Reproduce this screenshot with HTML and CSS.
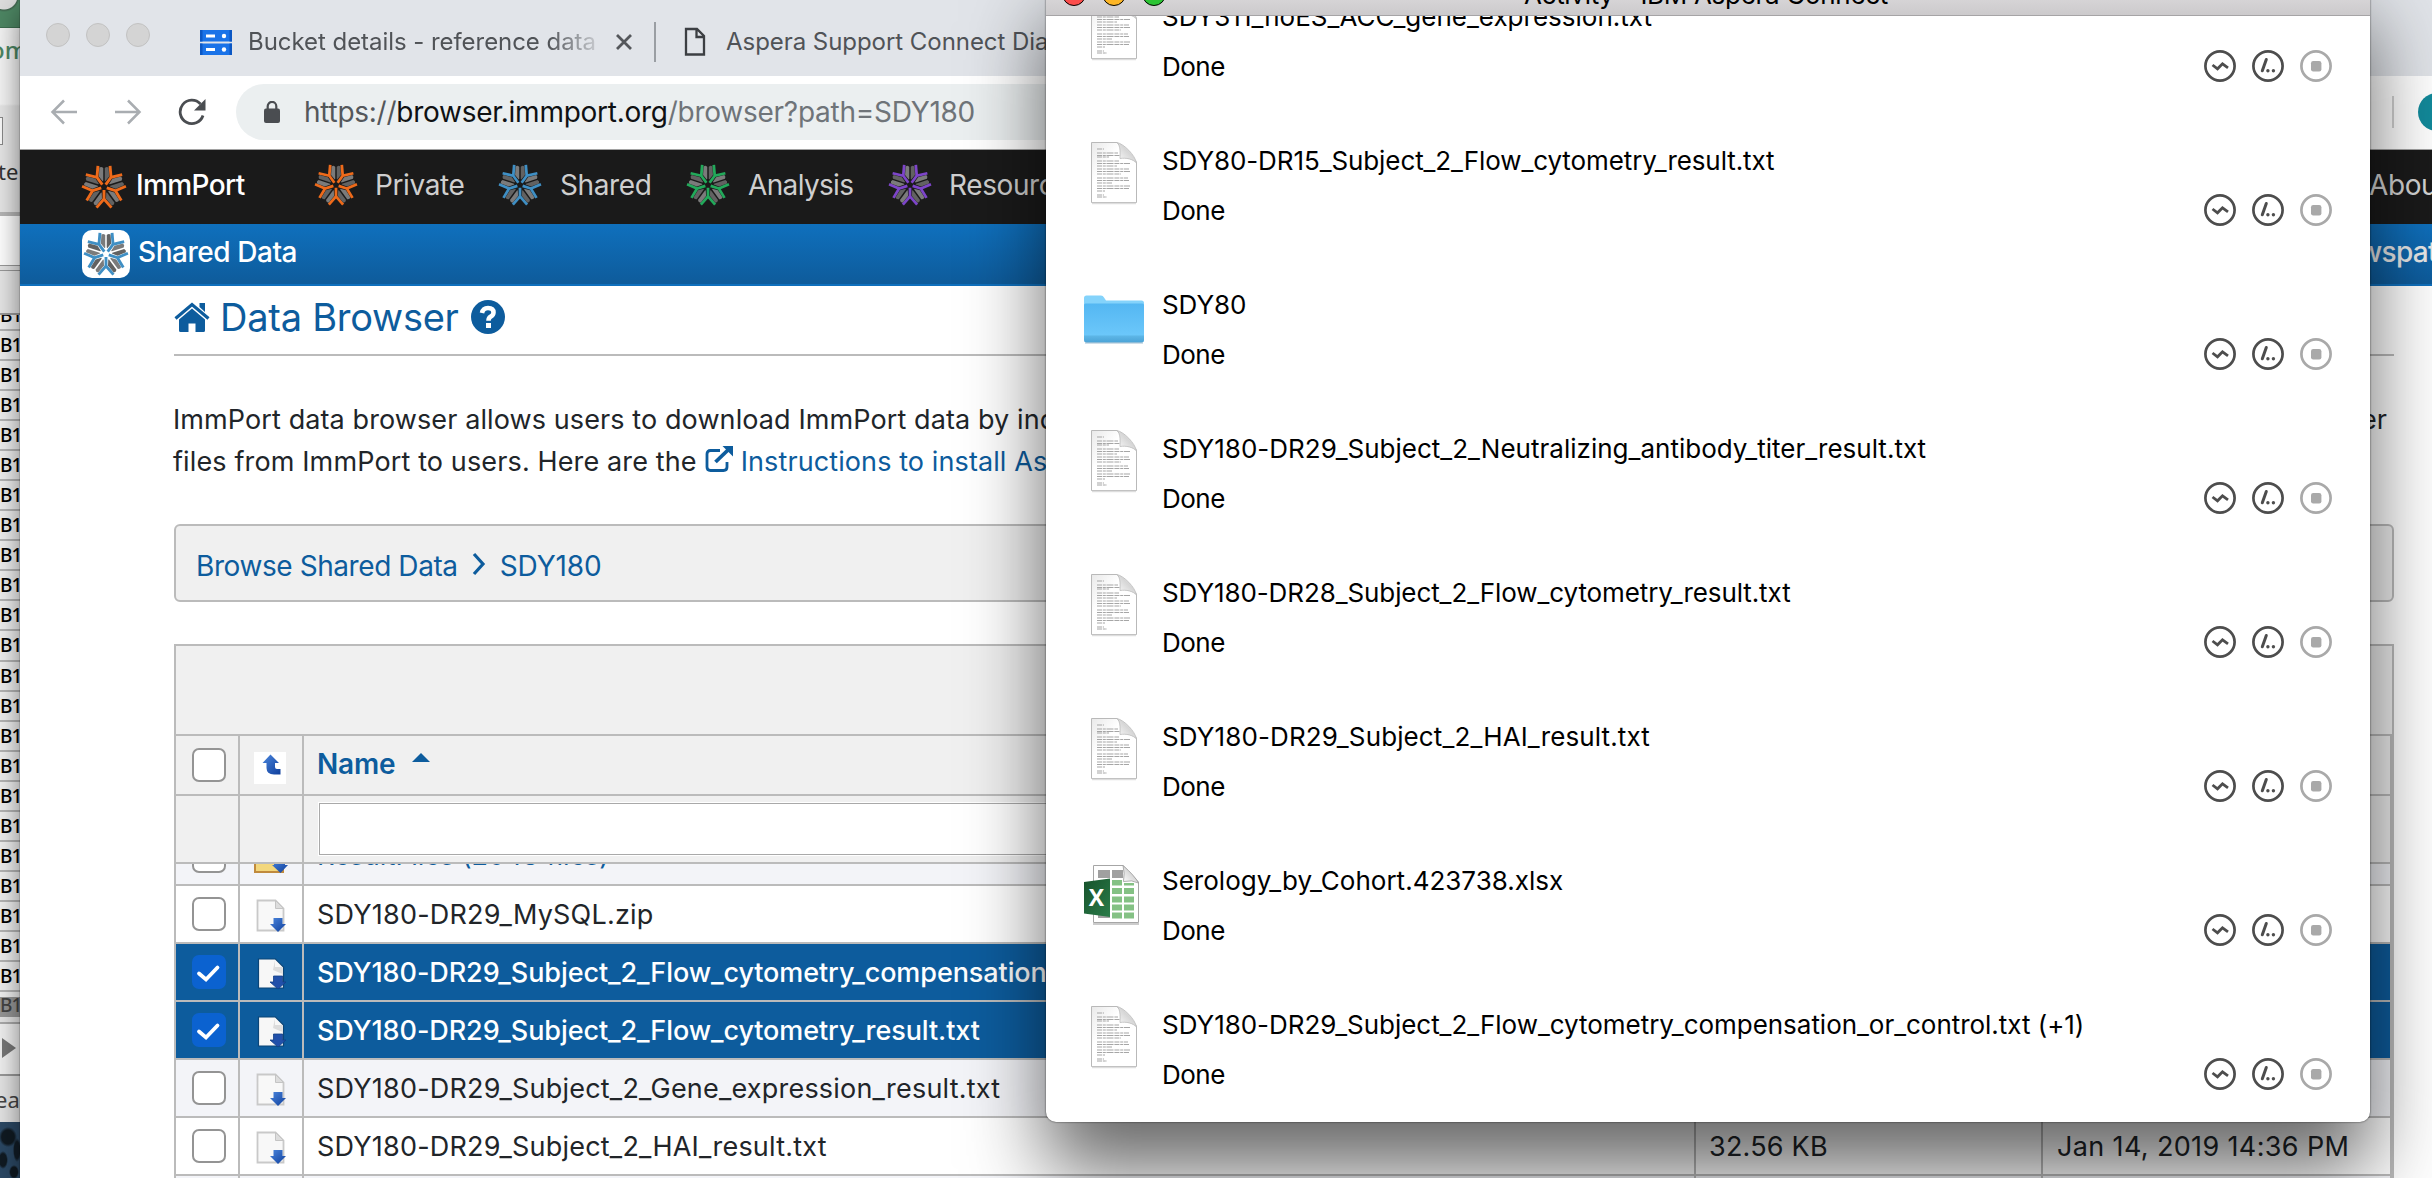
FILE: index.html
```
<!DOCTYPE html>
<html lang="en">
<head>
<meta charset="utf-8">
<title>ImmPort Data Browser</title>
<link rel="stylesheet" href="styles.css">
</head>
<body>
<svg width="0" height="0" class="defs" aria-hidden="true">
  <defs>
    <linearGradient id="paper" x1="0" y1="0" x2="1" y2="1"><stop offset="0" stop-color="#e9e9e9"/><stop offset=".35" stop-color="#fff"/><stop offset="1" stop-color="#fff"/></linearGradient>
    <linearGradient id="curl" x1="0" y1="1" x2="1" y2="0"><stop offset="0" stop-color="#fff"/><stop offset=".55" stop-color="#d6d6d6"/><stop offset="1" stop-color="#f4f4f4"/></linearGradient>
    <linearGradient id="folderFront" x1="0" y1="0" x2="0" y2="1"><stop offset="0" stop-color="#54b7f2"/><stop offset=".8" stop-color="#6bc7fa"/><stop offset=".84" stop-color="#5cb5e6"/><stop offset="1" stop-color="#4ba3d6"/></linearGradient>
    <linearGradient id="excel" x1="0" y1="0" x2="1" y2="1"><stop offset="0" stop-color="#17522b"/><stop offset="1" stop-color="#2a7c49"/></linearGradient>
    <linearGradient id="blue" x1="0" y1="0" x2="1" y2="1"><stop offset="0" stop-color="#4b86dd"/><stop offset="1" stop-color="#0f3f9c"/></linearGradient>
    <g id="arm">
      <path d="M-1.400-6-5.400-11-4.800-20.300q2.200-1.400 4 .6v13z" fill="#7b7b7b"/>
      <path d="M1.400-6 5.400-11 4.800-20.300q-2.200-1.400-4 .6v13z" fill="#626262"/>
      <path d="M0 3V12.500L-7.800 21.500M0 12.500 7.800 21.500" fill="none" stroke="currentColor" stroke-width="3"/>
    </g>
    <symbol id="flake" viewBox="-24 -24 48 48">
      <use href="#arm"/><use href="#arm" transform="rotate(72)"/><use href="#arm" transform="rotate(144)"/><use href="#arm" transform="rotate(216)"/><use href="#arm" transform="rotate(288)"/>
    </symbol>
    <symbol id="doc" viewBox="0 0 60 66">
      <path d="M7.500 2.500H33L52.500 22V62.500H7.500z" fill="url(#paper)" stroke="#b9b9b9"/>
      <path d="M8 63.500H52" stroke="#ddd" stroke-width="1.500"/>
      <path d="M33 2.500C37 6 36 14 36 18.500 42 17.500 49 19 52.500 23 51 15 40 4 33 2.500z" fill="url(#curl)" stroke="#bbb" stroke-width=".8"/>
      <path d="M13 9h7M13 13h21M13 15.500h23M13 17h12M13 21h22M13 23.500h33M13 26h20M13 29h32M13 31.500h33M13 34h24M13 38h31M13 40.500h32M13 43h15M13 46h33M13 48.500h32M13 51h8M13 55h7M13 57h10" stroke="#a6a6a6" stroke-width="1.100" stroke-dasharray="5 .8 3 .7 7 .9"/>
    </symbol>
    <symbol id="folder" viewBox="0 0 60 66">
      <path d="M0 30V14q0-2.500 2.500-2.500H17q2 0 3 2l2 3H57.500q2.500 0 2.500 2.500V30z" fill="#84d3fb"/>
      <path d="M0 21q0-1.500 1.500-1.500H58.500q1.500 0 1.500 1.500V56q0 2.500-2.500 2.500H2.500Q0 58.500 0 56z" fill="url(#folderFront)"/>
      <path d="M1 59H59" stroke="#3f7ea6" stroke-opacity=".5"/>
    </symbol>
    <symbol id="xlsx" viewBox="0 0 60 66">
      <path d="M9.500 1.500H39L54.500 18V58.500H9.500z" fill="#fff" stroke="#a6a6a6"/>
      <path d="M9 60H55" stroke="#bbb" stroke-width="1.500"/>
      <path d="M14 6H26V14H14zM28 6H39V14H28zM14 50H26V54H14z" fill="#a0a0a0"/>
      <path d="M28 16H38V21.500H28zM40 19H50V21.500H40zM28 24H38V30H28zM40 24H50V30H40zM28 32.500H38V38.500H28zM40 32.500H50V38.500H40zM28 40.500H38V46.500H28zM40 40.500H50V46.500H40zM28 48.500H38V54.500H28zM40 48.500H50V54.500H40z" fill="#84c184"/>
      <path d="M39 1.500Q41 9 39.500 17.500 48 15.500 54.500 19 51 12 39 1.500z" fill="url(#curl)" stroke="#999" stroke-width=".8"/>
      <path d="M0 18 26 14.500V53L0 49.500z" fill="url(#excel)"/>
      <text x="12.500" y="42" text-anchor="middle" font-family="Open Sans, sans-serif" font-weight="700" font-size="23" fill="#fff">X</text>
    </symbol>
    <symbol id="a-wave" viewBox="0 0 32 32"><circle cx="16" cy="16" r="14.600" fill="none" stroke="currentColor" stroke-width="2.700"/><path d="M8.500 15 13.500 18.800 18.500 13.800 24 17.800" fill="none" stroke="currentColor" stroke-width="2.800"/></symbol>
    <symbol id="a-path" viewBox="0 0 32 32"><circle cx="16" cy="16" r="14.600" fill="none" stroke="currentColor" stroke-width="2.700"/><path d="M10.300 20.800 14.300 9.500" stroke="currentColor" stroke-width="3" stroke-linecap="round"/><circle cx="15.900" cy="20.800" r="1.700" fill="currentColor"/><circle cx="21.400" cy="20.800" r="1.700" fill="currentColor"/></symbol>
    <symbol id="a-stop" viewBox="0 0 32 32"><circle cx="16" cy="16" r="14.600" fill="none" stroke="currentColor" stroke-width="2.700"/><rect x="11" y="11" width="10.400" height="10.400" rx="2.200" fill="currentColor"/></symbol>
    <symbol id="dl" viewBox="0 0 32 34">
      <path d="M2.500 2.500H20.500L28.500 10.500V32.500H2.500z" fill="#f8f8f8" stroke="#c9c9c9" stroke-width="1.800"/>
      <path d="M20.500 2.500V10.500H28.500z" fill="#ddd" stroke="#c4c4c4"/>
      <path d="M18.500 20H27.500V26H31L23 34 15 26H18.500z" fill="url(#blue)"/>
    </symbol>
    <symbol id="dl-on" viewBox="0 0 32 34">
      <path d="M3.500 3H20.500L28.500 11V32H3.500z" fill="#f7f7f7" stroke="#0b4577" stroke-width="1.200"/>
      <path d="M20 4V11H27.500V18L18 14z" fill="#dcdcdc"/>
      <path d="M18.500 20H27.500V26H31L23 33 15 26H18.500z" fill="#2150aa" stroke="#123f86" stroke-width=".8"/>
    </symbol>
  </defs>
</svg>

<div class="desktop">
  <div class="sheet">
    <div class="sheet-title"></div>
    <div class="sheet-ribbon"><span class="ribbon-tab">om</span><i class="ribbon-icon"></i><span class="ribbon-label">te</span></div>
    <div class="sheet-formula"></div>
    <div class="sheet-head"></div>
    <div class="sheet-rows">
      <div class="first">B1</div>
      <div>B1</div><div>B1</div><div>B1</div><div>B1</div><div>B1</div><div>B1</div><div>B1</div><div>B1</div><div>B1</div><div>B1</div><div>B1</div>
      <div>B1</div><div>B1</div><div>B1</div><div>B1</div><div>B1</div><div>B1</div><div>B1</div><div>B1</div><div>B1</div><div>B1</div><div>B1</div>
      <div class="picked">B1</div>
    </div>
    <div class="sheet-nav"><i></i></div>
    <div class="sheet-status">ead</div>
  </div>

  <div class="browser">
    <div class="tabs">
      <div class="dots"><i></i><i></i><i></i></div>
      <svg class="bucket" width="32" height="25" viewBox="0 0 32 25"><path d="M0 0H32V11.500H0zM0 13.500H32V25H0z" fill="#1a73e8"/><path d="M0 0H2.500V11.500H0zM29.500 0H32V11.500H29.500zM0 13.500H2.500V25H0zM29.500 13.500H32V25H29.500z" fill="#0b57c4"/><path d="M6 4.500h9v3H6zM6 18h9v3H6z" fill="#fff"/><circle cx="24" cy="6" r="2.200" fill="#fff"/><circle cx="24" cy="19.500" r="2.200" fill="#fff"/></svg>
      <span class="tab-title fade">Bucket details - reference data</span>
      <svg class="close" width="18" height="18" viewBox="0 0 18 18"><path d="M2 2 16 16M16 2 2 16" stroke="#54575b" stroke-width="2.800"/></svg>
      <i class="tab-sep"></i>
      <svg class="page" width="22" height="30" viewBox="0 0 22 30"><path d="M2 2H13L20 9V27.500H2zM12.500 2V10H20" fill="none" stroke="#3c3f43" stroke-width="2.300"/></svg>
      <span class="tab-title">Aspera Support Connect Diagnostic</span>
    </div>
    <div class="toolbar">
      <svg width="28" height="28" viewBox="0 0 28 28"><path d="M27 14H3M14 2.500 2.500 14 14 25.500" fill="none" stroke="#a9adb1" stroke-width="2.500"/></svg>
      <svg width="28" height="28" viewBox="0 0 28 28"><path d="M1 14H25M14 2.500 25.500 14 14 25.500" fill="none" stroke="#a9adb1" stroke-width="2.500"/></svg>
      <svg width="28" height="28" viewBox="0 0 28 28"><path d="M25 17.500A11.700 11.700 0 1 1 22.500 6" fill="none" stroke="#4a4d51" stroke-width="2.800"/><path d="M27.500 1V12.500H16z" fill="#4a4d51"/></svg>
      <div class="omnibox">
        <svg width="16" height="22" viewBox="0 0 16 22"><rect y="7.500" width="16" height="14.500" rx="2" fill="#4a4d51"/><path d="M3.700 9V5.200a4.300 4.300 0 0 1 8.600 0V9" fill="none" stroke="#4a4d51" stroke-width="2.200"/></svg>
        <span class="url"><span class="scheme">https://</span>browser.immport.org<span class="path">/browser?path=SDY180</span></span>
      </div>
      <i class="tool-sep"></i>
      <i class="avatar"></i>
    </div>

    <div class="nav">
      <div class="brand"><svg class="flake orange" width="48" height="46"><use href="#flake"/></svg>ImmPort</div>
      <div class="link private"><svg class="flake orange" width="44" height="44"><use href="#flake"/></svg>Private</div>
      <div class="link shared"><svg class="flake sky" width="44" height="44"><use href="#flake"/></svg>Shared</div>
      <div class="link analysis"><svg class="flake green" width="44" height="44"><use href="#flake"/></svg>Analysis</div>
      <div class="link resources"><svg class="flake violet" width="44" height="44"><use href="#flake"/></svg>Resources</div>
      <div class="about">About</div>
    </div>
    <div class="subnav">
      <span class="badge"><svg class="flake sky" width="46" height="46"><use href="#flake"/></svg></span>
      <span class="sub-title">Shared Data</span>
      <span class="wsp">wspat</span>
    </div>

    <div class="content">
      <h1>
        <svg width="36" height="30" viewBox="0 0 36 30"><path d="M25.500 1H31V10L25.500 5z" fill="#0d5c9d"/><path d="M1.500 16.500 18 2.500 34.500 16.500" fill="none" stroke="#0d5c9d" stroke-width="3.200"/><path d="M5 17.500 18 6.500 31 17.500V28.500Q31 30 29.500 30H21.500V21.500H14.500V30H6.500Q5 30 5 28.500z" fill="#0d5c9d"/></svg>
        <span>Data Browser</span>
        <svg width="34" height="34" viewBox="0 0 34 34"><circle cx="17" cy="17" r="17" fill="#0d5c9d"/><path d="M11 13Q12 8 17 8 22.500 8 22.500 12.500 22.500 15 19.500 16.800 17.500 18 17.500 20.800" fill="none" stroke="#fff" stroke-width="4.600"/><rect x="15" y="23" width="5" height="5" fill="#fff"/></svg>
      </h1>
      <div class="intro">
        <div class="line"><span class="clip">ImmPort data browser allows users to download ImmPort data by individual</span><span>er</span></div>
        <div class="line2"><span>files from ImmPort to users. Here are the</span>
          <svg width="28" height="26" viewBox="0 0 28 26"><path d="M15 4.500H5.500Q2 4.500 2 8V21Q2 24.500 5.500 24.500H18.500Q22 24.500 22 21V16" fill="none" stroke="#0d5c9d" stroke-width="2.800"/><path d="M10.500 16 23 4" stroke="#0d5c9d" stroke-width="3.800"/><path d="M17.500 0H28V10.500z" fill="#0d5c9d"/></svg>
          <a>Instructions to install Aspera</a></div>
      </div>
      <div class="crumbs"><span>Browse Shared Data</span><svg width="14" height="24" viewBox="0 0 14 24"><path d="M2 2 11 12 2 22" fill="none" stroke="#0d5c9d" stroke-width="3.200"/></svg><span class="here">SDY180</span></div>

      <div class="table">
        <div class="actions-bar"></div>
        <div class="row head">
          <div><i class="check"></i></div>
          <div><svg width="32" height="32" viewBox="0 0 32 32"><path d="M0 0H32V32H0z" fill="#fff"/><path d="M16.500 2.500 25 11H21V15Q21 17 23 17H26.500V22.500H20Q12.500 22 12.500 16V11H8.500z" fill="url(#blue)"/></svg></div>
          <div class="text name">Name<i class="sort"></i></div><div></div><div></div>
        </div>
        <div class="row filter"><div></div><div></div><div class="text"><i class="field"></i></div><div></div><div></div></div>
        <div class="row cut odd">
          <div><i class="check"></i></div>
          <div><svg width="34" height="34" viewBox="0 0 34 34"><path d="M1 8H29V33H1z" fill="#f3d77c" stroke="#c08a3d" stroke-width="2"/><path d="M20 20H31V26H34L26.500 34 18 26H20z" fill="url(#blue)"/></svg></div>
          <div class="text blue">ResultFiles (2043 files)</div><div></div><div></div>
        </div>
        <div class="row"><div><i class="check"></i></div><div><svg width="32" height="34"><use href="#dl"/></svg></div><div class="text">SDY180-DR29_MySQL.zip</div><div></div><div></div></div>
        <div class="row on"><div><i class="check"><svg width="34" height="34" viewBox="0 0 34 34"><path d="M7 18.500 14 24.500 25.500 12.500" fill="none" stroke="#fff" stroke-width="3.800" stroke-linecap="round"/></svg></i></div><div><svg width="32" height="34"><use href="#dl-on"/></svg></div><div class="text">SDY180-DR29_Subject_2_Flow_cytometry_compensation_or_control.txt</div><div></div><div></div></div>
        <div class="row on"><div><i class="check"><svg width="34" height="34" viewBox="0 0 34 34"><path d="M7 18.500 14 24.500 25.500 12.500" fill="none" stroke="#fff" stroke-width="3.800" stroke-linecap="round"/></svg></i></div><div><svg width="32" height="34"><use href="#dl-on"/></svg></div><div class="text">SDY180-DR29_Subject_2_Flow_cytometry_result.txt</div><div></div><div></div></div>
        <div class="row odd"><div><i class="check"></i></div><div><svg width="32" height="34"><use href="#dl"/></svg></div><div class="text">SDY180-DR29_Subject_2_Gene_expression_result.txt</div><div></div><div></div></div>
        <div class="row"><div><i class="check"></i></div><div><svg width="32" height="34"><use href="#dl"/></svg></div><div class="text">SDY180-DR29_Subject_2_HAI_result.txt</div><div class="text size">32.56 KB</div><div class="text date">Jan 14, 2019 14:36 PM</div></div>
        <div class="row odd"><div></div><div></div><div></div><div></div><div></div></div>
      </div>
    </div>
  </div>

  <div class="activity">
    <div class="titlebar"><div class="lights"><i class="r"></i><i class="y"></i><i class="g"></i></div><span>Activity – IBM Aspera Connect</span></div>
    <div class="list">
      <div class="item"><svg class="pic" width="60" height="66"><use href="#doc"/></svg><div class="info"><p class="loose">SDY311_noES_ACC_gene_expression.txt</p><p class="done">Done</p></div><div class="acts"><svg><use href="#a-wave"/></svg><svg><use href="#a-path"/></svg><svg class="off"><use href="#a-stop"/></svg></div></div>
      <div class="item"><svg class="pic" width="60" height="66"><use href="#doc"/></svg><div class="info"><p>SDY80-DR15_Subject_2_Flow_cytometry_result.txt</p><p class="done">Done</p></div><div class="acts"><svg><use href="#a-wave"/></svg><svg><use href="#a-path"/></svg><svg class="off"><use href="#a-stop"/></svg></div></div>
      <div class="item"><svg class="pic" width="60" height="66"><use href="#folder"/></svg><div class="info"><p>SDY80</p><p class="done">Done</p></div><div class="acts"><svg><use href="#a-wave"/></svg><svg><use href="#a-path"/></svg><svg class="off"><use href="#a-stop"/></svg></div></div>
      <div class="item"><svg class="pic" width="60" height="66"><use href="#doc"/></svg><div class="info"><p class="loose">SDY180-DR29_Subject_2_Neutralizing_antibody_titer_result.txt</p><p class="done">Done</p></div><div class="acts"><svg><use href="#a-wave"/></svg><svg><use href="#a-path"/></svg><svg class="off"><use href="#a-stop"/></svg></div></div>
      <div class="item"><svg class="pic" width="60" height="66"><use href="#doc"/></svg><div class="info"><p>SDY180-DR28_Subject_2_Flow_cytometry_result.txt</p><p class="done">Done</p></div><div class="acts"><svg><use href="#a-wave"/></svg><svg><use href="#a-path"/></svg><svg class="off"><use href="#a-stop"/></svg></div></div>
      <div class="item"><svg class="pic" width="60" height="66"><use href="#doc"/></svg><div class="info"><p class="looser">SDY180-DR29_Subject_2_HAI_result.txt</p><p class="done">Done</p></div><div class="acts"><svg><use href="#a-wave"/></svg><svg><use href="#a-path"/></svg><svg class="off"><use href="#a-stop"/></svg></div></div>
      <div class="item"><svg class="pic excel" width="60" height="66"><use href="#xlsx"/></svg><div class="info"><p class="loose">Serology_by_Cohort.423738.xlsx</p><p class="done">Done</p></div><div class="acts"><svg><use href="#a-wave"/></svg><svg><use href="#a-path"/></svg><svg class="off"><use href="#a-stop"/></svg></div></div>
      <div class="item"><svg class="pic" width="60" height="66"><use href="#doc"/></svg><div class="info"><p class="long">SDY180-DR29_Subject_2_Flow_cytometry_compensation_or_control.txt (+1)</p><p class="done">Done</p></div><div class="acts"><svg><use href="#a-wave"/></svg><svg><use href="#a-path"/></svg><svg class="off"><use href="#a-stop"/></svg></div></div>
    </div>
  </div>
</div>
</body>
</html>
```
FILE: styles.css
```
* { box-sizing: border-box; }
body { margin: 0; overflow: hidden; font-family: Inter, "Liberation Sans", sans-serif; font-size: 27px; color: #212529; }
svg { display: block; flex: none; }
i { display: block; flex: none; }
p, h1 { margin: 0; font-weight: 400; }
.defs { position: absolute; }

.desktop {
  position: relative; width: 2432px; height: 1178px; overflow: hidden; white-space: nowrap;
  background:
    radial-gradient(ellipse 9px 10px at 8px 1137px, #101a22 70%, transparent),
    radial-gradient(ellipse 4px 12px at 17px 1150px, #111c26 70%, transparent),
    radial-gradient(ellipse 5px 9px at 3px 1160px, #101a22 70%, transparent),
    radial-gradient(ellipse 5px 7px at 14px 1172px, #0f1820 70%, transparent),
    #2b4864;
}

/* spreadsheet window, mostly covered */
.sheet { position: absolute; left: 0; top: 0; width: 24px; height: 1122px; overflow: hidden; background: #e4e4e4; display: flex; flex-direction: column; font-family: "Noto Sans", sans-serif; }
.sheet-title { height: 28px; flex: none; background: radial-gradient(circle at 4px -4px, #ddd 13px, #41664f 14px, transparent 16px), #4d8663; border-bottom: 1px solid #3d6d50; }
.sheet-ribbon { height: 188px; flex: none; background: linear-gradient(#f4f4f4 0 76px, #e6e6e6 78px); border-bottom: 4px solid #b5b5b5; font-size: 24px; line-height: 32px; padding-top: 6px; display: flex; flex-direction: column; }
.ribbon-tab { color: #4d8663; margin-left: -10px; font-weight: 500; }
.ribbon-icon { width: 3px; height: 28px; margin-top: 51px; border: 1px solid #888; border-left: 0; background: #fafafa; }
.ribbon-label { margin-top: 10px; margin-left: -2px; color: #333; font-size: 22px; }
.sheet-formula { height: 50px; flex: none; background: #fff; border-bottom: 1px solid #999; }
.sheet-head { height: 45px; flex: none; margin-top: 4px; border-top: 1px solid #999; border-bottom: 2px solid #999; background: #e6e6e6; }
.sheet-rows { flex: none; font-size: 19px; letter-spacing: -1px; color: #000; background: #f0f0f0; font-weight: 500; }
.sheet-rows div { height: 30.05px; padding-left: 0; line-height: 29px; border-bottom: 2px solid #b5b5b5; }
.sheet-rows .first { height: 16px; line-height: 1px; overflow: hidden; }
.sheet-rows .picked { height: 20px; line-height: 17px; margin-top: 5px; background: #969696; color: #444; border: 0; }
.sheet-nav { height: 54px; flex: none; margin-top: 5px; border-top: 2px solid #aaa; border-bottom: 2px solid #999; display: flex; align-items: center; background: #f0f0f0; }
.sheet-nav i { margin: -3px 0 0 2px; border-left: 14px solid #777; border-top: 10px solid transparent; border-bottom: 10px solid transparent; }
.sheet-status { flex: 1; font-size: 22px; line-height: 46px; margin-left: -5px; color: #444; }

/* browser window */
.browser { position: absolute; left: 20px; top: 0; width: 2412px; height: 1178px; background: #fff; box-shadow: 0 10px 26px rgba(0,0,0,.5), 0 0 1px rgba(0,0,0,.8); overflow: hidden; }
.tabs { height: 76px; background: #e1e4e9; display: flex; align-items: center; padding: 8px 0 0 26px; }
.dots { display: flex; gap: 16px; margin: -14px 50px 0 0; }
.dots i { width: 24px; height: 24px; border-radius: 50%; background: #d4d4d4; border: 1px solid #c2c2c2; }
.tab-title { font-size: 24px; line-height: 30px; letter-spacing: -.05px; color: #505357; }
.bucket { margin: 0 16px 0 0; }
.fade { width: 353px; -webkit-mask-image: linear-gradient(90deg, #000 300px, rgba(0,0,0,.12) 352px); mask-image: linear-gradient(90deg, #000 300px, rgba(0,0,0,.12) 352px); }
.close { margin-left: 14px; }
.tab-sep { width: 2px; height: 40px; background: #9a9ea3; margin: 0 28px 0 21px; }
.page { margin-right: 20px; }
.toolbar { height: 74px; border-bottom: 1px solid #a2a2a2; display: flex; align-items: center; gap: 36px; padding: 0 0 1px 30px; }
.omnibox { margin-left: -6px; width: 2076px; flex: none; height: 56px; border-radius: 28px; background: #ebeff0; display: flex; align-items: center; gap: 24px; padding: 0 0 1px 28px; font-size: 28px; letter-spacing: -.26px; color: #0f1113; }
.scheme { color: #54575b; }
.path { color: #6f7479; }
.tool-sep { width: 2px; height: 32px; margin-left: 44px; background: #d0d0d0; }
.avatar { width: 38px; height: 38px; border-radius: 50%; background: #128a9b; margin-left: -12px; }

.nav { height: 74px; background: #1a1a1a; display: flex; align-items: center; padding: 0 0 5px 60px; font-size: 28px; }
.nav > div { display: flex; align-items: center; }
.nav .flake { overflow: visible; }
.brand { width: 234px; gap: 8px; color: #fff; font-weight: 500; letter-spacing: -.6px; }
.brand .flake { position: relative; top: 2px; }
.link { gap: 17px; color: #cfcfcf; letter-spacing: -.4px; }
.private { width: 184px; }
.shared { width: 188px; gap: 18px; }
.analysis { width: 202px; gap: 18px; letter-spacing: -.65px; }
.about { margin-left: auto; width: 63px; color: #d5d5d5; letter-spacing: -.4px; }
.orange { color: #ee6a1a; }
.sky { color: #3f8fc4; }
.green { color: #22a95a; }
.violet { color: #7d45c9; }
.subnav { height: 62px; background: linear-gradient(#0f70bd, #0e5c9c 58px); border-bottom: 2px solid #0f70bd; display: flex; align-items: center; padding-left: 62px; color: #fff; font-size: 28px; font-weight: 500; letter-spacing: -.45px; }
.badge { width: 48px; height: 48px; border-radius: 10px; background: #fff; display: flex; align-items: center; justify-content: center; }
.sub-title, .wsp { line-height: 40px; margin-top: -4px; }
.sub-title { margin-left: 8px; }
.wsp { margin-left: auto; width: 73px; color: #e8e8e8; letter-spacing: -.7px; }

.content { padding-left: 154px; width: 2374px; }
h1 { height: 70px; border-bottom: 2px solid #bbb; display: flex; align-items: center; padding-bottom: 6px; color: #0d5c9d; font-size: 38px; letter-spacing: -.25px; }
h1 span { margin: 0 12px 0 10px; }
.intro { padding-top: 43px; height: 126px; line-height: 42px; letter-spacing: .1px; margin-left: -1px; }
.line { display: flex; justify-content: space-between; padding-right: 7px; }
.line2 { display: flex; align-items: center; }
.line2 svg { margin: -6px 8px 0 8px; }
a, .blue { color: #0d5c9d; }
.line2 span { letter-spacing: .13px; }
.crumbs { height: 78px; margin-top: 42px; border: 2px solid #bbb; border-radius: 6px; background: #f0f0f0; display: flex; align-items: center; padding: 6px 0 0 20px; color: #0d5c9d; font-size: 28px; letter-spacing: -.42px; }
.crumbs svg { margin: -4px 14px 0 14px; }
.here { letter-spacing: -.1px; }

.table { margin-top: 42px; border: 2px solid #bbb; border-bottom: 0; letter-spacing: .21px; }
.actions-bar { height: 90px; background: #f0f0f0; border-bottom: 2px solid #bbb; }
.row { display: grid; grid-template-columns: 64px 64px 1392px 347px 349px; height: 58px; background: #fff; }
.row > div { display: flex; align-items: center; justify-content: center; border-right: 2px solid #bbb; border-bottom: 2px solid #bbb; min-width: 0; overflow: hidden; }
.row > .text { justify-content: flex-start; padding-left: 13px; }
.row svg { margin-top: 1px; }
.head { height: 60px; }
.head > div, .filter > div { background: #f0f0f0; }
.head svg { margin: 6px 2px 0 0; }
.head .name { font-size: 28px; font-weight: 600; letter-spacing: -.2px; color: #0d5c9d; padding-bottom: 2px; }
.sort { border: 9px solid transparent; border-top: 0; border-bottom: 9px solid #0d5c9d; margin: -13px 0 0 17px; }
.filter { height: 68px; }
.field { width: 1360px; height: 52px; margin-left: 2px; border: 1px solid #a9a9a9; background: #fff; box-shadow: 0 0 0 1px #fff; }
.row.cut { height: 22px; }
.row.cut > div { align-items: flex-end; line-height: 56px; }
.cut .check { margin-bottom: 11px; }
.cut svg { margin-bottom: 11px; }
.row.cut .blue { letter-spacing: -.05px; }
.odd { background: #f3f4f8; }
.on { background: #0d5c9d; color: #fff; font-weight: 500; letter-spacing: -.08px; }
.check { width: 34px; height: 34px; margin-left: 3px; border: 2px solid #949494; border-radius: 7px; background: #fff; }
.on .check { border: 0; background: #0b62d0; }
.on .check svg { margin: 0; }
.date { letter-spacing: .36px; }
.row > .date { padding-left: 14px; }

/* transfer activity window */
.activity { position: absolute; left: 1046px; top: -28px; width: 1324px; height: 1150px; border-radius: 10px; background: #fff; color: #000; font-size: 26px; box-shadow: 0 0 2px rgba(0,0,0,.75), 0 48px 80px rgba(0,0,0,.6); display: flex; flex-direction: column; }
.titlebar { height: 44px; flex: none; border-bottom: 1px solid #a6a4a6; border-radius: 10px 10px 0 0; background: linear-gradient(#e8e6e8, #cccacc); display: grid; grid-template-columns: 1fr auto 1fr; align-items: center; letter-spacing: -.3px; }
.titlebar span { margin: 1px 4px 0 0; }
.lights { display: flex; gap: 16px; padding-left: 16px; }
.lights i { width: 24px; height: 24px; border-radius: 50%; border: 1px solid; }
.r { background: #fc4d4c; border-color: #dd3b39; }
.y { background: #fdb626; border-color: #dd9c1c; }
.g { background: #2cc434; border-color: #1da727; }
.list { flex: 1; overflow: hidden; border-radius: 0 0 10px 10px; }
.item { height: 144px; padding: 0 38px; display: flex; }
.item:first-child { margin-top: -36px; }
.pic { margin-top: 16px; }
.excel { margin-top: 20px; }
.info { margin-left: 18px; padding-top: 21px; line-height: 32px; letter-spacing: -.09px; flex: 1; }
.loose { letter-spacing: .01px; }
.looser { letter-spacing: .12px; }
.long { letter-spacing: -.03px; }
.done { margin-top: 18px; letter-spacing: -.5px; }
.acts { display: flex; gap: 16px; margin-top: 70px; color: #4d4d4d; }
.acts svg { width: 32px; height: 32px; }
.off { color: #a9a9a9; }
```
